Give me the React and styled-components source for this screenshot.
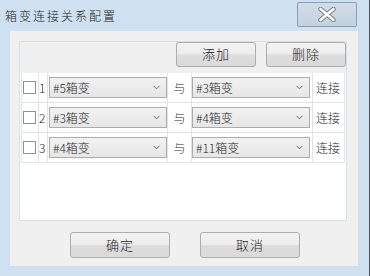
import React from 'react';
import styled, { createGlobalStyle } from 'styled-components';

const GlobalStyle = createGlobalStyle`
  html, body {
    margin: 0;
    padding: 0;
    background: #cfe0f1;
  }
  * {
    box-sizing: border-box;
  }
`;

const font = `"Noto Sans CJK SC", "Noto Sans", sans-serif`;

const Window = styled.div`
  width: 370px;
  height: 276px;
  background: #cfe0f1;
  border-right: 1px solid #4a5560;
  display: flex;
  flex-direction: column;
  font-family: ${font};
  font-weight: 300;
  color: #1e1e1e;
`;

const TitleBar = styled.div`
  height: 31px;
  display: flex;
  align-items: flex-start;
  justify-content: space-between;
  padding: 2px 12px 0 5px;
`;

const Title = styled.div`
  font-size: 12px;
  letter-spacing: 2px;
  line-height: 14px;
  margin-top: 7px;
  color: #222;
`;

const CloseButton = styled.button`
  width: 60px;
  height: 25px;
  border: 1px solid #8d9fb2;
  border-radius: 2px;
  background: linear-gradient(#d2dde9, #c3d1df);
  display: flex;
  align-items: center;
  justify-content: center;
  padding: 0;
`;

const Client = styled.div`
  flex: 1;
  margin: 0 11px 10px 10px;
  background: #f0f0f0;
  display: flex;
  flex-direction: column;
  padding: 10px 11px 0 9px;
`;

const Panel = styled.div`
  height: 180px;
  border: 1px solid #d6e0e8;
  background: #fff;
  display: flex;
  flex-direction: column;
`;

const Header = styled.div`
  height: 31px;
  background: #f0f0f0;
  display: flex;
  justify-content: flex-end;
  align-items: flex-start;
  gap: 10px;
`;

const Button = styled.button`
  width: ${({ $w }) => $w}px;
  height: ${({ $h }) => $h}px;
  border: 1px solid #adadad;
  border-radius: 3px;
  background: linear-gradient(#f3f3f3 0%, #ececec 48%, #dcdcdc 52%, #dadada 100%);
  font-family: ${font};
  font-weight: 300;
  font-size: 13px;
  color: #1e1e1e;
  padding: 0 0 2px;
  letter-spacing: 1px;
`;

const Table = styled.div`
  margin-left: 1px;
  width: 324px;
  display: grid;
  grid-template-columns: 17px 9px 120px 24px 121px 33px;
`;

const Cell = styled.div`
  height: 30px;
  border-bottom: 1px solid #e3e3e3;
  border-left: 1px solid #e3e3e3;
  display: flex;
  align-items: center;
  justify-content: ${({ $center }) => ($center ? 'center' : 'flex-start')};
  font-size: 12px;
  padding: ${({ $pad }) => $pad || '0'};
  &:nth-child(6n) {
    border-right: 1px solid #e3e3e3;
  }
`;

const Check = styled.span`
  width: 13px;
  height: 13px;
  border: 1px solid #8f8f8f;
  background: #fff;
  margin-left: 1px;
`;

const Combo = styled.div`
  width: 100%;
  height: 21px;
  border: 1px solid #acacac;
  background: linear-gradient(#f2f2f2, #e6e6e6);
  display: flex;
  align-items: center;
  justify-content: space-between;
  padding: 0 6px 0 3px;
  font-size: 12px;
`;

const Chevron = styled.svg`
  width: 7px;
  height: 5px;
`;

const Footer = styled.div`
  flex: 1;
  display: flex;
  gap: 30px;
  padding: 11px 0 0 51px;
`;

const rows = [
  ['1', '#5箱变', '#3箱变'],
  ['2', '#3箱变', '#4箱变'],
  ['3', '#4箱变', '#11箱变'],
];

const Select = ({ value }) => (
  <Combo>
    <span>{value}</span>
    <Chevron viewBox="0 0 7 5">
      <path d="M0.5 0.8 L3.5 3.8 L6.5 0.8" fill="none" stroke="#6b6b6b" strokeWidth="1" />
    </Chevron>
  </Combo>
);

export default function App() {
  return (
    <>
      <GlobalStyle />
      <Window>
        <TitleBar>
          <Title>箱变连接关系配置</Title>
          <CloseButton>
            <svg width="20" height="15" viewBox="0 0 20 15">
              <path
                d="M3.5 2 L16.5 13 M16.5 2 L3.5 13"
                stroke="#6f7a85"
                strokeWidth="4.4"
                strokeLinecap="round"
              />
              <path
                d="M3.5 2 L16.5 13 M16.5 2 L3.5 13"
                stroke="#ffffff"
                strokeWidth="2.6"
                strokeLinecap="round"
              />
            </svg>
          </CloseButton>
        </TitleBar>
        <Client>
          <Panel>
            <Header>
              <Button $w={80} $h={25}>添加</Button>
              <Button $w={80} $h={25}>删除</Button>
            </Header>
            <Table>
              {rows.map(([n, a, b]) => (
                <React.Fragment key={n}>
                  <Cell><Check /></Cell>
                  <Cell>{n}</Cell>
                  <Cell $pad="0 0 0 1px"><Select value={a} /></Cell>
                  <Cell $center>与</Cell>
                  <Cell $pad="0 2px 0 0"><Select value={b} /></Cell>
                  <Cell $pad="0 0 0 3px">连接</Cell>
                </React.Fragment>
              ))}
            </Table>
          </Panel>
          <Footer>
            <Button $w={100} $h={26}>确定</Button>
            <Button $w={100} $h={26}>取消</Button>
          </Footer>
        </Client>
      </Window>
    </>
  );
}
